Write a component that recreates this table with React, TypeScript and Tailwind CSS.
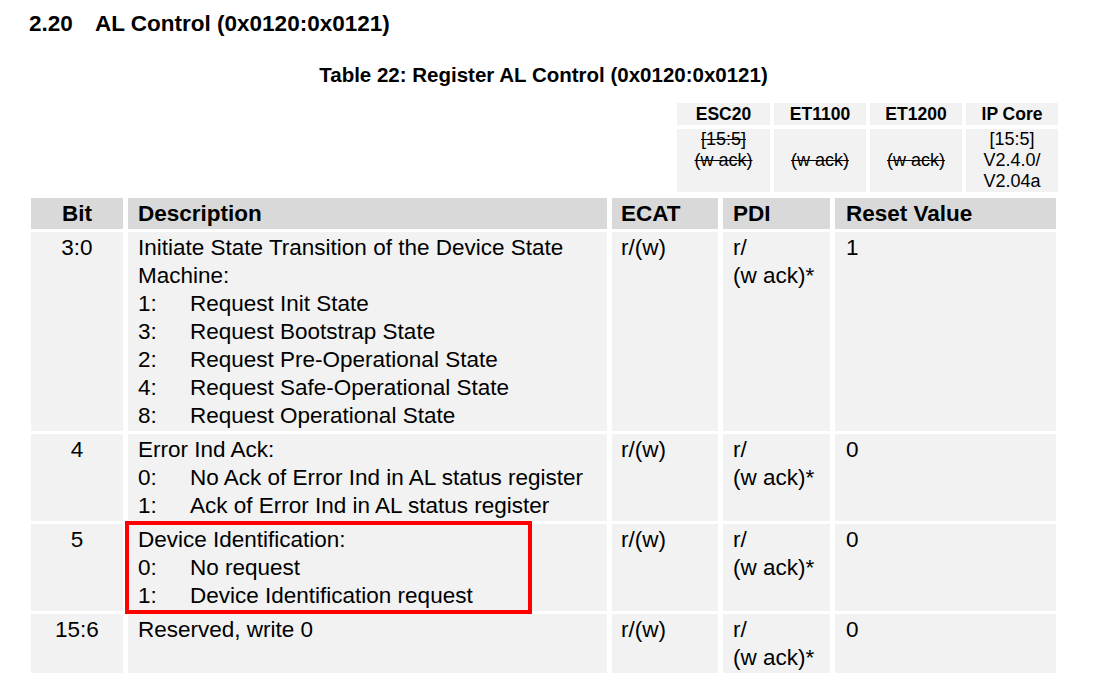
import React from 'react';

type Item = { n: string; text: string };

type Row = {
    bit: string
    title: string
    items: Item[]
    highlight?: boolean
}

const rows: Row[] = [
    {
        bit: '3:0',
        title: 'Initiate State Transition of the Device State\nMachine:',
        items: [
            { n: '1:', text: 'Request Init State' },
            { n: '3:', text: 'Request Bootstrap State' },
            { n: '2:', text: 'Request Pre-Operational State' },
            { n: '4:', text: 'Request Safe-Operational State' },
            { n: '8:', text: 'Request Operational State' },
        ],
    },
    {
        bit: '4',
        title: 'Error Ind Ack:',
        items: [
            { n: '0:', text: 'No Ack of Error Ind in AL status register' },
            { n: '1:', text: 'Ack of Error Ind in AL status register' },
        ],
    },
    {
        bit: '5',
        title: 'Device Identification:',
        items: [
            { n: '0:', text: 'No request' },
            { n: '1:', text: 'Device Identification request' },
        ],
        highlight: true,
    },
    {
        bit: '15:6',
        title: 'Reserved, write 0',
        items: [],
    },
];

const resetValues = ['1', '0', '0', '0'];

function App() {
    return (
        <div className="w-[1106px] h-[688px] bg-white text-black overflow-hidden font-['Liberation_Sans',Arial,sans-serif]">
            <h1 className="pt-[11px] pl-[29px] text-[22.5px] leading-[26px] font-bold">
                <span className="inline-block w-[66px]">2.20</span>
                AL Control (0x0120:0x0121)
            </h1>

            <div className="ml-[31px] w-[1025px] mt-[26px] text-center text-[20.5px] leading-[24px] font-bold">
                Table 22: Register AL Control (0x0120:0x0121)
            </div>

            {/* version table */}
            <div className="ml-[677px] mt-[16px] grid grid-cols-[93px_92px_92px_92px] gap-x-[4px] gap-y-[4px] text-center">
                {['ESC20', 'ET1100', 'ET1200', 'IP Core'].map(h => (
                    <div key={h} className="bg-[#f2f2f2] h-[22px] text-[17.5px] leading-[22px] font-bold">
                        {h}
                    </div>
                ))}
                <div className="bg-[#f2f2f2] h-[63px] text-[18px] leading-[21px] line-through">
                    [15:5]<br />(w ack)
                </div>
                <div className="bg-[#f2f2f2] h-[63px] text-[18px] leading-[21px]">
                    &nbsp;<br /><span className="line-through">(w ack)</span>
                </div>
                <div className="bg-[#f2f2f2] h-[63px] text-[18px] leading-[21px]">
                    &nbsp;<br /><span className="line-through">(w ack)</span>
                </div>
                <div className="bg-[#f2f2f2] h-[63px] text-[18px] leading-[21px]">
                    [15:5]<br />V2.4.0/<br />V2.04a
                </div>
            </div>

            {/* register table */}
            <div className="ml-[31px] mt-[6px] grid grid-cols-[92px_479px_106px_107px_221px] gap-x-[5px] gap-y-[3px] text-[22.5px] leading-[28px]">
                <div className="bg-[#d9d9d9] pt-[2px] pb-[1px] text-center font-bold">Bit</div>
                <div className="bg-[#d9d9d9] pt-[2px] pb-[1px] pl-[10px] font-bold">Description</div>
                <div className="bg-[#d9d9d9] pt-[2px] pb-[1px] pl-[9px] font-bold">ECAT</div>
                <div className="bg-[#d9d9d9] pt-[2px] pb-[1px] pl-[10px] font-bold">PDI</div>
                <div className="bg-[#d9d9d9] pt-[2px] pb-[1px] pl-[11px] font-bold">Reset Value</div>

                {rows.map((row, i) => (
                    <React.Fragment key={row.bit}>
                        <div className="bg-[#f2f2f2] pt-[2px] pb-[1px] text-center">{row.bit}</div>
                        <div className="relative bg-[#f2f2f2] pt-[2px] pb-[1px] pl-[10px] whitespace-pre-line">
                            <div>{row.title}</div>
                            {row.items.map(item => (
                                <div key={item.n + item.text} className="flex whitespace-nowrap">
                                    <span className="w-[52px] shrink-0">{item.n}</span>
                                    <span>{item.text}</span>
                                </div>
                            ))}
                            {row.highlight && (
                                <div className="absolute left-[-3px] top-[-3px] w-[407px] h-[93px] border-4 border-[#ff0000]" />
                            )}
                        </div>
                        <div className="bg-[#f2f2f2] pt-[2px] pb-[1px] pl-[9px]">r/(w)</div>
                        <div className="bg-[#f2f2f2] pt-[2px] pb-[1px] pl-[10px]">r/<br />(w ack)*</div>
                        <div className="bg-[#f2f2f2] pt-[2px] pb-[1px] pl-[11px]">{resetValues[i]}</div>
                    </React.Fragment>
                ))}
            </div>
        </div>
    );
}

export default App;
